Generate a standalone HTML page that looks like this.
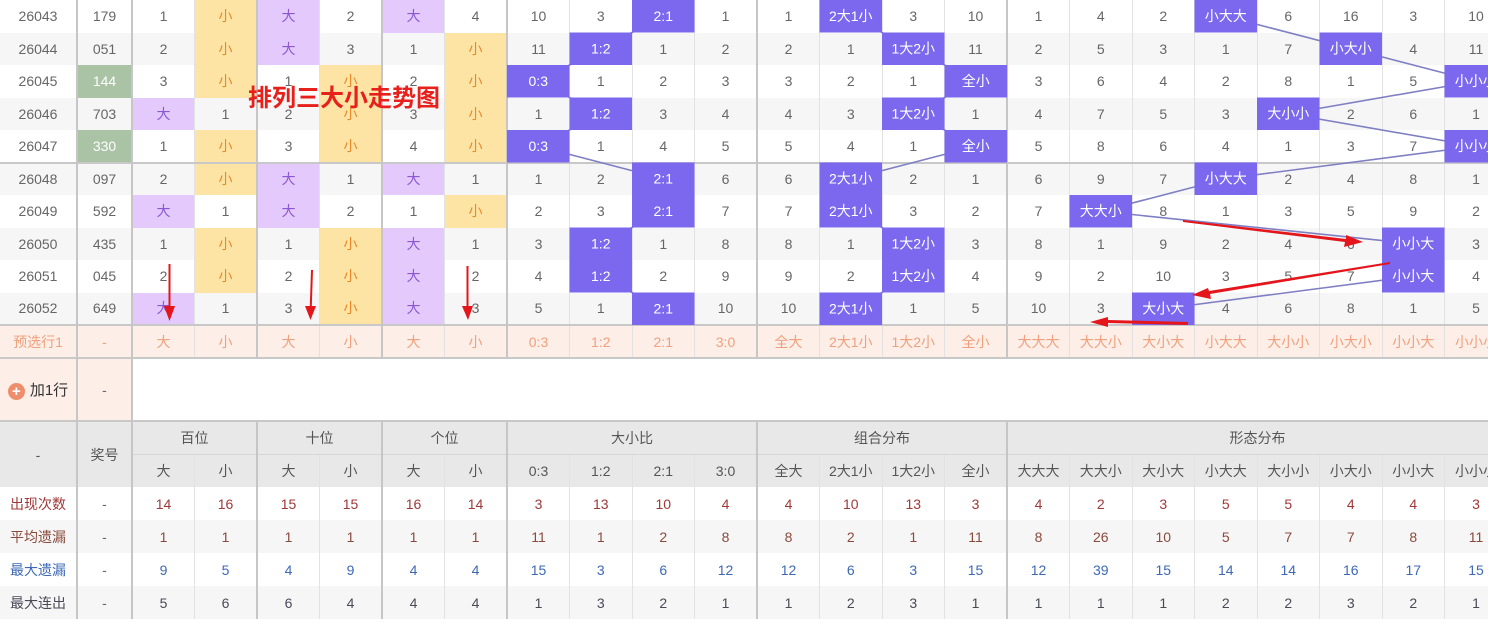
<!DOCTYPE html>
<html><head><meta charset="utf-8">
<style>
html,body{margin:0;padding:0;background:#fff;}
#w{position:relative;width:1488px;height:623px;overflow:hidden;font-family:"Liberation Sans","Noto Sans CJK SC",sans-serif;}
table{border-collapse:collapse;table-layout:fixed;width:1632px;position:absolute;left:0;top:0;}
td{height:32.5px;padding:0;text-align:center;font-size:14px;color:#666;border-left:1px solid #e2e2e2;white-space:nowrap;overflow:hidden;box-sizing:border-box;}
tr.a td{background:#f6f6f6;}
td.L{border-left:2px solid #c6c6c6;}
td.c0{border-left:none;}
td.c1{border-left:2px solid #c6c6c6;}
td.d{background:#e3c9fc !important;color:#8b57d2;}
td.x{background:#fde4a4 !important;color:#e8892a;}
td.g{background:#a9c3a4 !important;color:#fff;}
tr.t5 td{border-top:2px solid #c8c8c8;}
tr.p td{background:#fdeee7;color:#f0a07c;border-top:2px solid #c8c8c8;height:33px;}
tr.add td{height:63px;border-top:2px solid #c8c8c8;}
tr.h td{background:#e8e8e8;color:#555;height:33px;border-top:1px solid #d6d6d6;}
tr.h1 td{border-top:2px solid #c8c8c8;}
tr.s td{height:33px;}
tr.r1 td{color:#a03838;}
tr.r2 td{color:#8b4a3c;}
tr.r3 td{color:#3d68b5;}
tr.r4 td{color:#4a4a55;}
.plus{display:inline-block;width:17px;height:17px;border-radius:50%;background:#ef8e6c;color:#fff;font-size:15px;line-height:17px;font-weight:bold;vertical-align:middle;margin-right:5px;}
svg{position:absolute;left:0;top:0;}
</style></head><body><div id="w">
<table>
<colgroup><col style="width:77px"><col style="width:55px">
<col span="24" style="width:62.5px"></colgroup>
<tr><td class="c0">26043</td><td class="c1">179</td><td class="L">1</td><td class="x">小</td><td class="L d">大</td><td>2</td><td class="L d">大</td><td>4</td><td class="L">10</td><td>3</td><td></td><td>1</td><td class="L">1</td><td></td><td>3</td><td>10</td><td class="L">1</td><td>4</td><td>2</td><td></td><td>6</td><td>16</td><td>3</td><td>10</td></tr>
<tr class="a"><td class="c0">26044</td><td class="c1">051</td><td class="L">2</td><td class="x">小</td><td class="L d">大</td><td>3</td><td class="L">1</td><td class="x">小</td><td class="L">11</td><td></td><td>1</td><td>2</td><td class="L">2</td><td>1</td><td></td><td>11</td><td class="L">2</td><td>5</td><td>3</td><td>1</td><td>7</td><td></td><td>4</td><td>11</td></tr>
<tr><td class="c0">26045</td><td class="c1 g">144</td><td class="L">3</td><td class="x">小</td><td class="L">1</td><td class="x">小</td><td class="L">2</td><td class="x">小</td><td class="L"></td><td>1</td><td>2</td><td>3</td><td class="L">3</td><td>2</td><td>1</td><td></td><td class="L">3</td><td>6</td><td>4</td><td>2</td><td>8</td><td>1</td><td>5</td><td></td></tr>
<tr class="a"><td class="c0">26046</td><td class="c1">703</td><td class="L d">大</td><td>1</td><td class="L">2</td><td class="x">小</td><td class="L">3</td><td class="x">小</td><td class="L">1</td><td></td><td>3</td><td>4</td><td class="L">4</td><td>3</td><td></td><td>1</td><td class="L">4</td><td>7</td><td>5</td><td>3</td><td></td><td>2</td><td>6</td><td>1</td></tr>
<tr><td class="c0">26047</td><td class="c1 g">330</td><td class="L">1</td><td class="x">小</td><td class="L">3</td><td class="x">小</td><td class="L">4</td><td class="x">小</td><td class="L"></td><td>1</td><td>4</td><td>5</td><td class="L">5</td><td>4</td><td>1</td><td></td><td class="L">5</td><td>8</td><td>6</td><td>4</td><td>1</td><td>3</td><td>7</td><td></td></tr>
<tr class="a t5"><td class="c0">26048</td><td class="c1">097</td><td class="L">2</td><td class="x">小</td><td class="L d">大</td><td>1</td><td class="L d">大</td><td>1</td><td class="L">1</td><td>2</td><td></td><td>6</td><td class="L">6</td><td></td><td>2</td><td>1</td><td class="L">6</td><td>9</td><td>7</td><td></td><td>2</td><td>4</td><td>8</td><td>1</td></tr>
<tr><td class="c0">26049</td><td class="c1">592</td><td class="L d">大</td><td>1</td><td class="L d">大</td><td>2</td><td class="L">1</td><td class="x">小</td><td class="L">2</td><td>3</td><td></td><td>7</td><td class="L">7</td><td></td><td>3</td><td>2</td><td class="L">7</td><td></td><td>8</td><td>1</td><td>3</td><td>5</td><td>9</td><td>2</td></tr>
<tr class="a"><td class="c0">26050</td><td class="c1">435</td><td class="L">1</td><td class="x">小</td><td class="L">1</td><td class="x">小</td><td class="L d">大</td><td>1</td><td class="L">3</td><td></td><td>1</td><td>8</td><td class="L">8</td><td>1</td><td></td><td>3</td><td class="L">8</td><td>1</td><td>9</td><td>2</td><td>4</td><td>6</td><td></td><td>3</td></tr>
<tr><td class="c0">26051</td><td class="c1">045</td><td class="L">2</td><td class="x">小</td><td class="L">2</td><td class="x">小</td><td class="L d">大</td><td>2</td><td class="L">4</td><td></td><td>2</td><td>9</td><td class="L">9</td><td>2</td><td></td><td>4</td><td class="L">9</td><td>2</td><td>10</td><td>3</td><td>5</td><td>7</td><td></td><td>4</td></tr>
<tr class="a"><td class="c0">26052</td><td class="c1">649</td><td class="L d">大</td><td>1</td><td class="L">3</td><td class="x">小</td><td class="L d">大</td><td>3</td><td class="L">5</td><td>1</td><td></td><td>10</td><td class="L">10</td><td></td><td>1</td><td>5</td><td class="L">10</td><td>3</td><td></td><td>4</td><td>6</td><td>8</td><td>1</td><td>5</td></tr>
<tr class="p"><td class="c0">预选行1</td><td class="c1">-</td><td class="L">大</td><td>小</td><td class="L">大</td><td>小</td><td class="L">大</td><td>小</td><td class="L">0:3</td><td>1:2</td><td>2:1</td><td>3:0</td><td class="L">全大</td><td>2大1小</td><td>1大2小</td><td>全小</td><td class="L">大大大</td><td>大大小</td><td>大小大</td><td>小大大</td><td>大小小</td><td>小大小</td><td>小小大</td><td>小小小</td></tr>
<tr class="add"><td class="c0" style="background:#fdeee7;color:#333;font-size:15px"><span class="plus">+</span>加1行</td><td class="c1" style="background:#fdeee7">-</td><td class="L" colspan="24" style="background:#fff"></td></tr>
<tr class="h h1"><td class="c0" rowspan="2">-</td><td class="c1" rowspan="2">奖号</td><td class="L" colspan="2">百位</td><td class="L" colspan="2">十位</td><td class="L" colspan="2">个位</td><td class="L" colspan="4">大小比</td><td class="L" colspan="4">组合分布</td><td class="L" colspan="8">形态分布</td></tr>
<tr class="h"><td class="L">大</td><td>小</td><td class="L">大</td><td>小</td><td class="L">大</td><td>小</td><td class="L">0:3</td><td>1:2</td><td>2:1</td><td>3:0</td><td class="L">全大</td><td>2大1小</td><td>1大2小</td><td>全小</td><td class="L">大大大</td><td>大大小</td><td>大小大</td><td>小大大</td><td>大小小</td><td>小大小</td><td>小小大</td><td>小小小</td></tr>
<tr class="s r1"><td class="c0">出现次数</td><td class="c1" style="color:#666">-</td><td class="L">14</td><td>16</td><td class="L">15</td><td>15</td><td class="L">16</td><td>14</td><td class="L">3</td><td>13</td><td>10</td><td>4</td><td class="L">4</td><td>10</td><td>13</td><td>3</td><td class="L">4</td><td>2</td><td>3</td><td>5</td><td>5</td><td>4</td><td>4</td><td>3</td></tr>
<tr class="s a r2"><td class="c0">平均遗漏</td><td class="c1" style="color:#666">-</td><td class="L">1</td><td>1</td><td class="L">1</td><td>1</td><td class="L">1</td><td>1</td><td class="L">11</td><td>1</td><td>2</td><td>8</td><td class="L">8</td><td>2</td><td>1</td><td>11</td><td class="L">8</td><td>26</td><td>10</td><td>5</td><td>7</td><td>7</td><td>8</td><td>11</td></tr>
<tr class="s r3"><td class="c0">最大遗漏</td><td class="c1" style="color:#666">-</td><td class="L">9</td><td>5</td><td class="L">4</td><td>9</td><td class="L">4</td><td>4</td><td class="L">15</td><td>3</td><td>6</td><td>12</td><td class="L">12</td><td>6</td><td>3</td><td>15</td><td class="L">12</td><td>39</td><td>15</td><td>14</td><td>14</td><td>16</td><td>17</td><td>15</td></tr>
<tr class="s a r4"><td class="c0">最大连出</td><td class="c1" style="color:#666">-</td><td class="L">5</td><td>6</td><td class="L">6</td><td>4</td><td class="L">4</td><td>4</td><td class="L">1</td><td>3</td><td>2</td><td>1</td><td class="L">1</td><td>2</td><td>3</td><td>1</td><td class="L">1</td><td>1</td><td>1</td><td>2</td><td>2</td><td>3</td><td>2</td><td>1</td></tr>
</table>
<svg width="1488" height="623" viewBox="0 0 1488 623">
<g fill="none" stroke="#7f7fc4" stroke-width="1.6">
<polyline points="663.25,16.25 600.75,48.75 538.25,81.25 600.75,113.75 538.25,146.25 663.25,178.75 663.25,211.25 600.75,243.75 600.75,276.25 663.25,308.75"/>
<polyline points="850.75,16.25 913.25,48.75 975.75,81.25 913.25,113.75 975.75,146.25 850.75,178.75 850.75,211.25 913.25,243.75 913.25,276.25 850.75,308.75"/>
<polyline points="1225.75,16.25 1350.75,48.75 1475.75,81.25 1288.25,113.75 1475.75,146.25 1225.75,178.75 1100.75,211.25 1413.25,243.75 1413.25,276.25 1163.25,308.75"/>
</g>
<g fill="#7b68ee">
<rect x="632" y="0" width="62.5" height="32.5"/><rect x="569.5" y="32.5" width="62.5" height="32.5"/><rect x="507" y="65" width="62.5" height="32.5"/><rect x="569.5" y="97.5" width="62.5" height="32.5"/><rect x="507" y="130" width="62.5" height="32.5"/><rect x="632" y="162.5" width="62.5" height="32.5"/><rect x="632" y="195" width="62.5" height="32.5"/><rect x="569.5" y="227.5" width="62.5" height="32.5"/><rect x="569.5" y="260" width="62.5" height="32.5"/><rect x="632" y="292.5" width="62.5" height="32.5"/>
<rect x="819.5" y="0" width="62.5" height="32.5"/><rect x="882" y="32.5" width="62.5" height="32.5"/><rect x="944.5" y="65" width="62.5" height="32.5"/><rect x="882" y="97.5" width="62.5" height="32.5"/><rect x="944.5" y="130" width="62.5" height="32.5"/><rect x="819.5" y="162.5" width="62.5" height="32.5"/><rect x="819.5" y="195" width="62.5" height="32.5"/><rect x="882" y="227.5" width="62.5" height="32.5"/><rect x="882" y="260" width="62.5" height="32.5"/><rect x="819.5" y="292.5" width="62.5" height="32.5"/>
<rect x="1194.5" y="0" width="62.5" height="32.5"/><rect x="1319.5" y="32.5" width="62.5" height="32.5"/><rect x="1444.5" y="65" width="62.5" height="32.5"/><rect x="1257" y="97.5" width="62.5" height="32.5"/><rect x="1444.5" y="130" width="62.5" height="32.5"/><rect x="1194.5" y="162.5" width="62.5" height="32.5"/><rect x="1069.5" y="195" width="62.5" height="32.5"/><rect x="1382" y="227.5" width="62.5" height="32.5"/><rect x="1382" y="260" width="62.5" height="32.5"/><rect x="1132" y="292.5" width="62.5" height="32.5"/>
</g>
<g fill="#fff" font-size="14" text-anchor="middle" font-family="Liberation Sans,Noto Sans CJK SC,sans-serif">
<text x="663.25" y="21">2:1</text><text x="600.75" y="53.5">1:2</text><text x="538.25" y="86">0:3</text><text x="600.75" y="118.5">1:2</text><text x="538.25" y="151">0:3</text><text x="663.25" y="183.5">2:1</text><text x="663.25" y="216">2:1</text><text x="600.75" y="248.5">1:2</text><text x="600.75" y="281">1:2</text><text x="663.25" y="313.5">2:1</text>
<text x="850.75" y="21">2大1小</text><text x="913.25" y="53.5">1大2小</text><text x="975.75" y="86">全小</text><text x="913.25" y="118.5">1大2小</text><text x="975.75" y="151">全小</text><text x="850.75" y="183.5">2大1小</text><text x="850.75" y="216">2大1小</text><text x="913.25" y="248.5">1大2小</text><text x="913.25" y="281">1大2小</text><text x="850.75" y="313.5">2大1小</text>
<text x="1225.75" y="21">小大大</text><text x="1350.75" y="53.5">小大小</text><text x="1475.75" y="86">小小小</text><text x="1288.25" y="118.5">大小小</text><text x="1475.75" y="151">小小小</text><text x="1225.75" y="183.5">小大大</text><text x="1100.75" y="216">大大小</text><text x="1413.25" y="248.5">小小大</text><text x="1413.25" y="281">小小大</text><text x="1163.25" y="313.5">大小大</text>
</g>
<text x="248" y="106" fill="#e8201c" font-size="24" font-weight="bold" font-family="Liberation Sans,Noto Sans CJK SC,sans-serif">排列三大小走势图</text>
<g fill="#e4161b" stroke="none">
<polygon points="168.5,264 170.5,264 170.5,306 175,306 169.5,321 164,306 168.5,306"/>
<polygon points="311,270 313,270 311.8,306 316,306 310.5,320 305,306 309.8,306"/>
<polygon points="466.5,266 468.5,266 468.5,306 473,306 468,320 462,306 466.5,306"/>
<polygon points="1183,220 1183,222 1345,242 1344,247 1363,242 1346,235 1346,239"/>
<polygon points="1390,262 1390,264 1210,294 1211,299 1192,295 1208,288 1209,291"/>
<polygon points="1188,322 1188,325 1108,323 1108,327 1090,322 1108,317 1108,320"/>
</g>
</svg>
</div></body></html>
